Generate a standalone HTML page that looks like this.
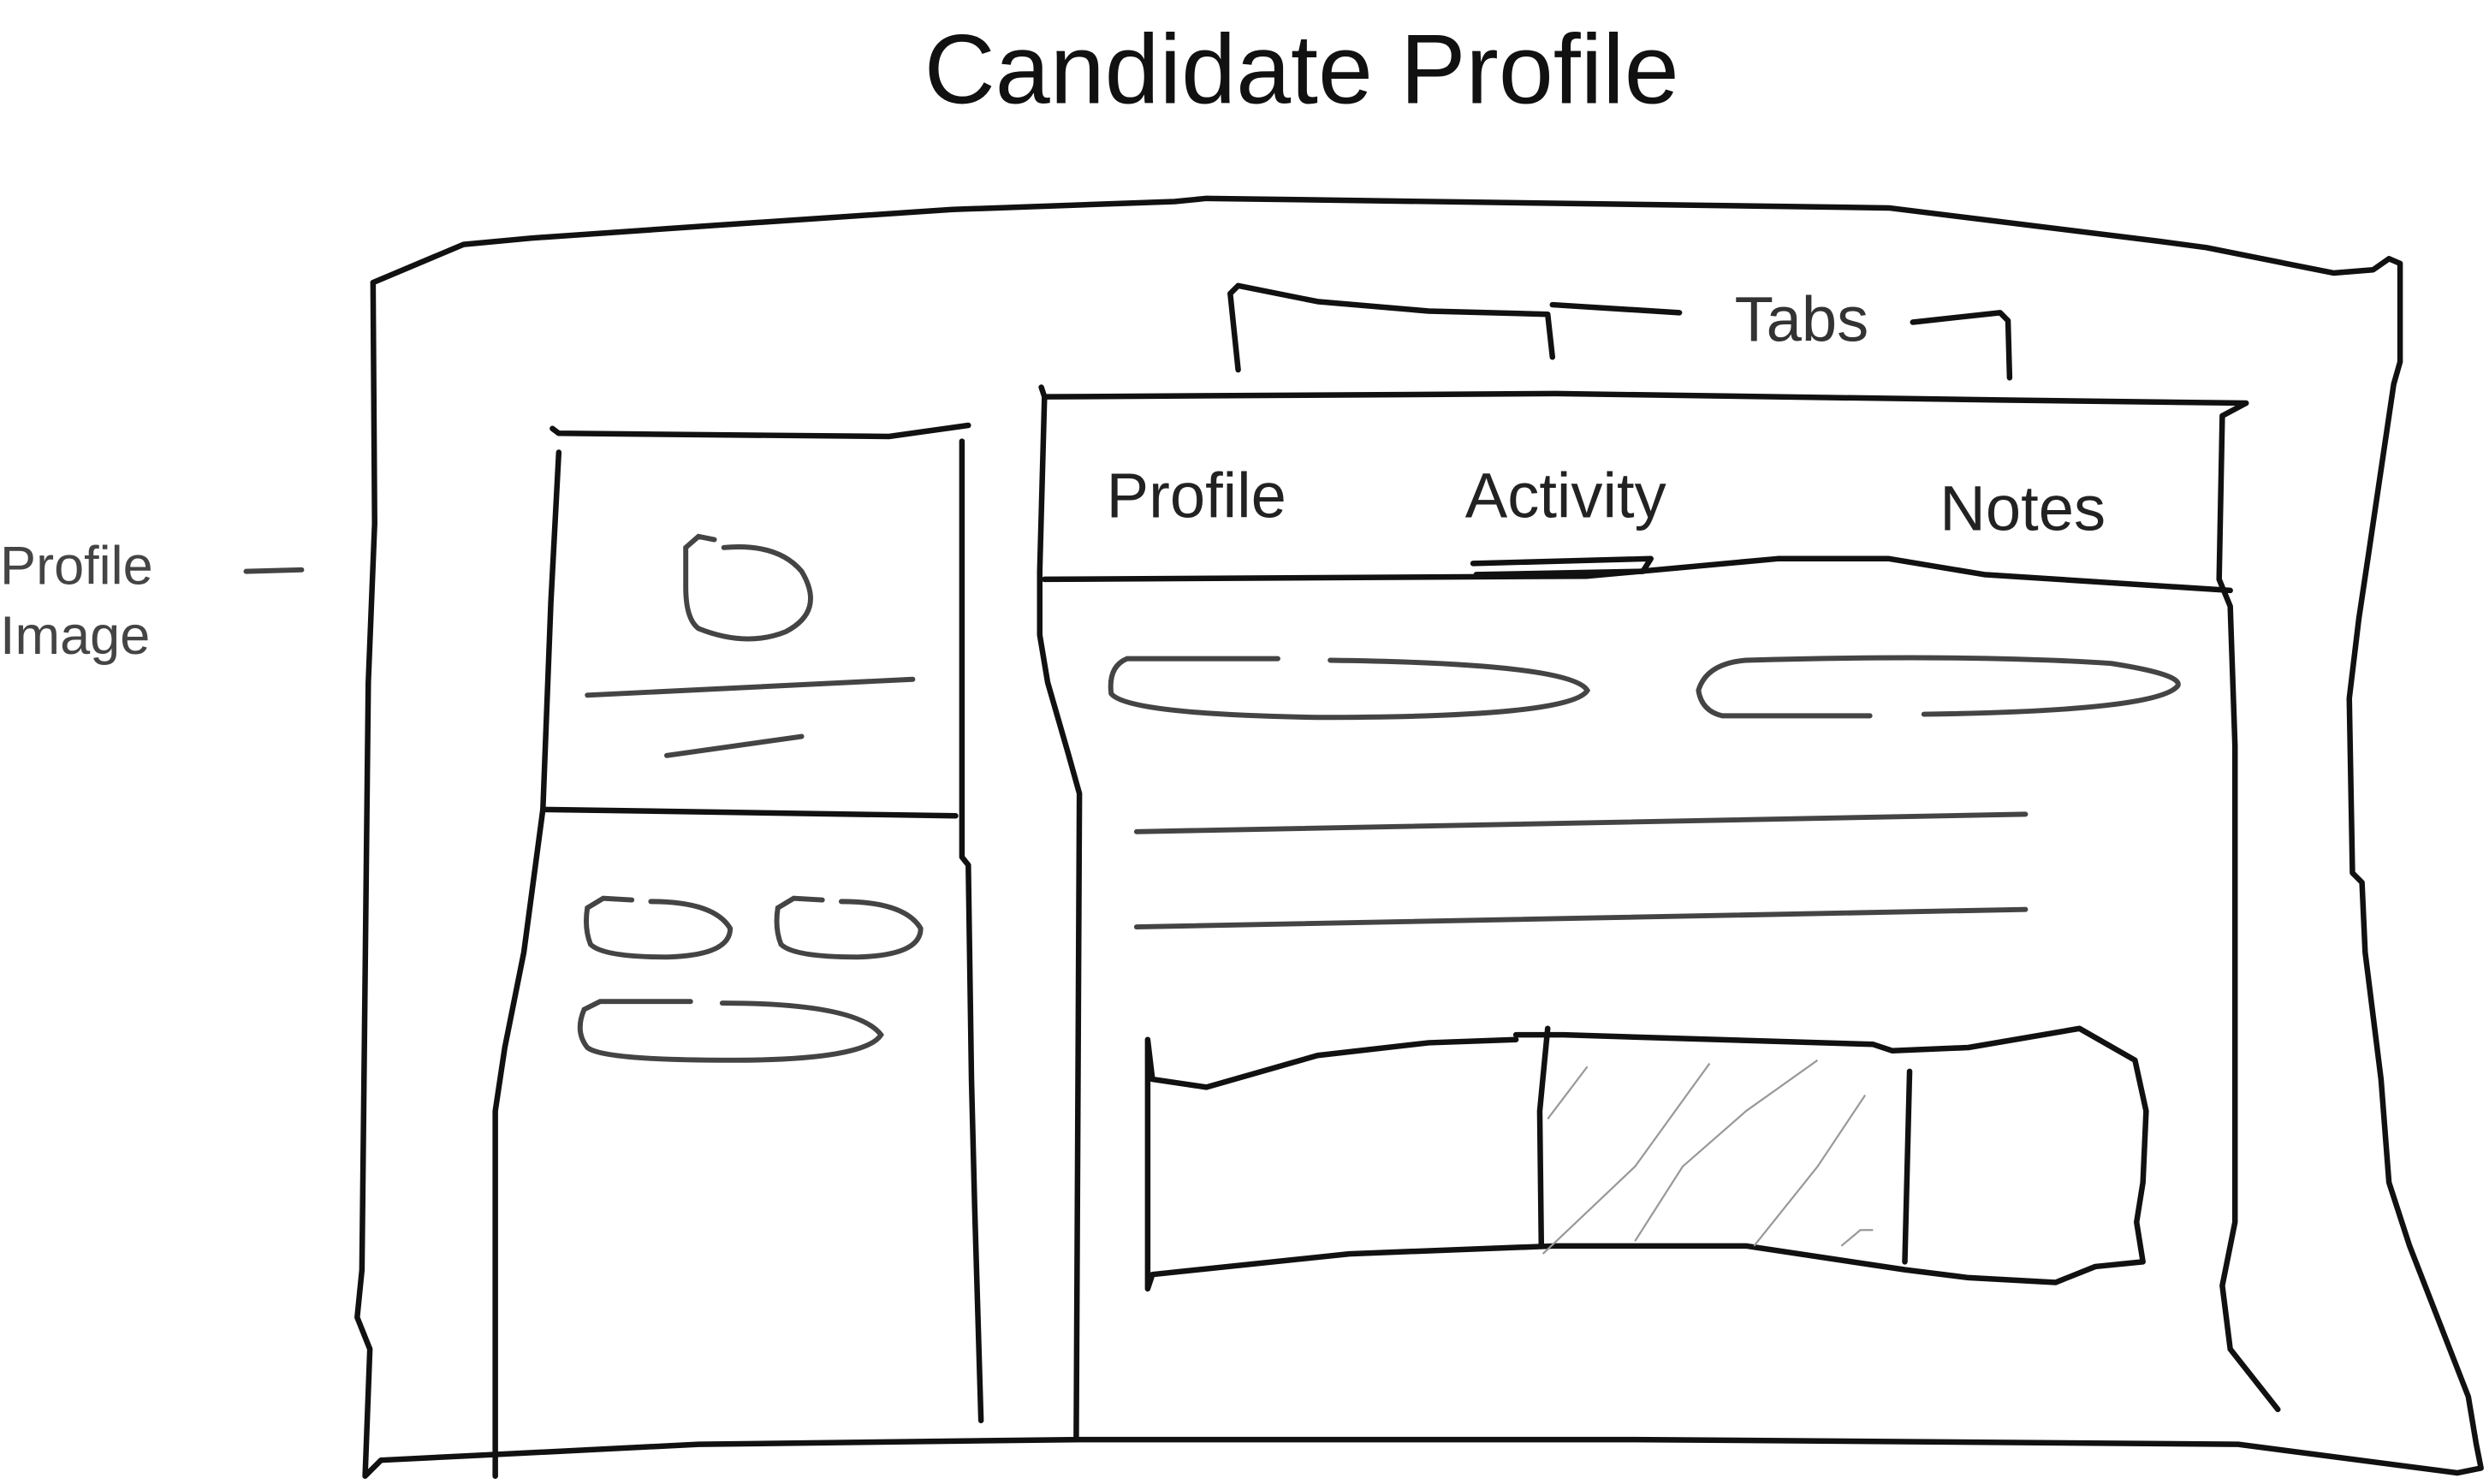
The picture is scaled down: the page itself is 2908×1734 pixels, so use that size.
<!DOCTYPE html>
<html><head><meta charset="utf-8"><style>
html,body{margin:0;padding:0;background:#fff;}
svg{display:block;}
text{font-family:"Liberation Sans","DejaVu Sans",sans-serif;}
</style></head><body>
<svg width="2908" height="1734" viewBox="0 0 1568 935" xmlns="http://www.w3.org/2000/svg">
<g fill="none" stroke="#111" stroke-width="3.5" stroke-linecap="round" stroke-linejoin="round">
<path d="M235,178 L292,154 L335,150 L450,142 L600,132 L740,127 L760,125 L1190,131 L1360,152 L1390,156 L1470,172 L1495,170 L1505,163 L1512,166 L1512,228 L1508,242 L1492,350 L1486,390 L1480,440 L1482,550 L1488,556 L1490,600 L1500,680 L1505,745 L1518,785 L1555,880 L1560,910 L1563,925 L1548,928 L1410,910 L1030,907 L680,907 L440,910 L300,917 L240,920 L230,930 L233,850 L225,830 L228,800 L232,430 L236,330 Z"/>
<path d="M348,270 L352,273 L560,275 L610,268"/>
<path d="M352,285 L347,380 L342,510 L330,600 L318,660 L312,700 L312,930"/>
<path d="M606,278 L606,540 L610,545 L612,680 L614,760 L618,895"/>
<path d="M342,510 L602,514"/>
<path d="M656,244 L658,250 L980,248 L1260,252 L1415,254 L1400,262 L1398,365 L1405,382 L1408,470 L1408,770 L1400,810 L1405,850 L1435,888"/>
<path d="M658,250 L655,360 L655,400 L660,430 L673,475 L680,500 L678,905"/>
<path d="M658,365 L1000,363 L1120,352 L1190,352 L1250,362 L1405,372"/>
<path d="M928,355 L1040,352 L1035,360 L930,362"/>
<path d="M780,233 L775,185 L780,180 L830,190 L900,196 L975,198 L978,225 M978,192 L1058,197"/>
<path d="M1205,203 L1260,197 L1265,202 L1266,238"/>
<path d="M723,655 L726,680 L760,685 L830,665 L900,657 L955,655 M955,652 L985,652 L1180,658 L1192,662 L1240,660 L1310,648 L1345,668 L1352,700 L1350,745 L1346,770 L1350,795 L1320,798 L1295,808 L1240,805 L1200,800 L1100,785 L980,785 L850,790 L726,803 L723,812 M723,655 L723,812"/>
<path d="M975,648 L970,700 L971,785"/>
<path d="M1203,675 L1200,795"/>
</g>
<g fill="none" stroke="#444" stroke-width="3.2" stroke-linecap="round">
<path d="M456,345 Q490,342 505,360 Q520,385 495,398 Q470,408 440,396 Q432,390 432,370 L432,345 L440,338 L450,340"/>
<path d="M370,438 L575,428"/>
<path d="M420,476 L505,464"/>
<path d="M410,568 Q450,568 460,585 Q460,602 420,603 Q380,603 372,595 Q368,585 370,572 L380,566 L398,567"/>
<path d="M530,568 Q570,568 580,585 Q580,602 540,603 Q500,603 492,595 Q488,585 490,572 L500,566 L518,567"/>
<path d="M455,632 Q540,632 555,652 Q545,668 460,668 Q380,668 370,660 Q362,650 368,636 L378,631 L435,631"/>
<path d="M805,415 L710,415 Q698,420 700,437 Q710,450 830,452 Q990,452 1000,435 Q990,418 838,416"/>
<path d="M1178,451 L1085,451 Q1072,448 1070,435 Q1075,418 1100,416 Q1240,412 1330,418 Q1375,425 1372,432 Q1360,448 1212,450"/>
<path d="M716,524 L1276,513"/>
<path d="M716,584 L1276,573"/>
<path d="M155,360 L190,359"/>
</g>
<g fill="none" stroke="#999" stroke-width="1.2">
<path d="M975,705 L1000,672"/>
<path d="M972,790 L1030,735 L1077,670"/>
<path d="M1030,782 L1060,735 L1100,700 L1145,668"/>
<path d="M1105,785 L1145,735 L1175,690"/>
<path d="M1160,785 L1172,775 L1180,775"/>
</g>
<text x="820" y="65" font-size="62" text-anchor="middle" fill="#111">Candidate Profile</text>
<text x="1135" y="215" font-size="40" text-anchor="middle" fill="#333">Tabs</text>
<text x="697" y="326" font-size="40" fill="#222">Profile</text>
<text x="923" y="326" font-size="40" fill="#222">Activity</text>
<text x="1222" y="334" font-size="40" fill="#222">Notes</text>
<text x="0" y="368" font-size="34" fill="#444">Profile</text>
<text x="0" y="412" font-size="34" fill="#444">Image</text>
</svg>
</body></html>
